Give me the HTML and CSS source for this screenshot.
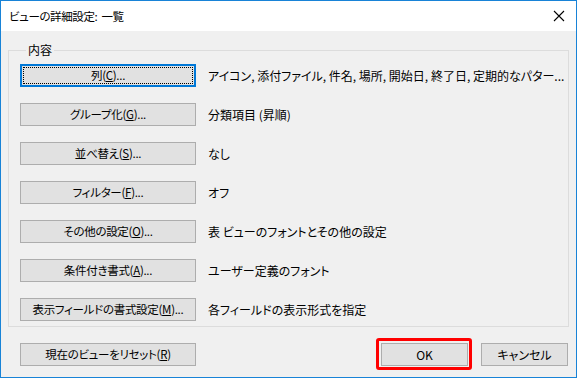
FILE: index.html
```html
<!DOCTYPE html>
<html lang="ja">
<head>
<meta charset="utf-8">
<link rel="stylesheet" href="styles.css">
</head>
<body>
<div class="window">
  <div class="titlebar">
    <span class="title">ビューの詳細設定: 一覧</span>
    <svg class="close" width="12" height="12" viewBox="0 0 12 12"><path d="M1 1L11 11M11 1L1 11" stroke="#000" stroke-width="1.1" fill="none"/></svg>
  </div>
  <div class="content">
    <fieldset class="group">
      <legend class="legend">内容</legend>
      <div class="rows">
        <div class="row"><button class="btn focused"><span class="focusring">列(<u>C</u>)...</span></button><span class="desc">アイコン, 添付ファイル, 件名, 場所, 開始日, 終了日, 定期的なパター...</span></div>
        <div class="row"><button class="btn">グループ化(<u>G</u>)...</button><span class="desc">分類項目 (昇順)</span></div>
        <div class="row"><button class="btn">並べ替え(<u>S</u>)...</button><span class="desc">なし</span></div>
        <div class="row"><button class="btn">フィルター(<u>F</u>)...</button><span class="desc">オフ</span></div>
        <div class="row"><button class="btn">その他の設定(<u>O</u>)...</button><span class="desc">表 ビューのフォントとその他の設定</span></div>
        <div class="row"><button class="btn">条件付き書式(<u>A</u>)...</button><span class="desc">ユーザー定義のフォント</span></div>
        <div class="row"><button class="btn">表示フィールドの書式設定(<u>M</u>)...</button><span class="desc">各フィールドの表示形式を指定</span></div>
      </div>
    </fieldset>
    <div class="footer">
      <button class="btn">現在のビューをリセット(<u>R</u>)</button>
      <div class="footer-right">
        <div class="ok-wrap"><button class="btn small">OK</button><span class="highlight"></span></div>
        <button class="btn small">キャンセル</button>
      </div>
    </div>
  </div>
</div>
</body>
</html>
```

FILE: styles.css
```css
html, body {
  margin: 0;
  padding: 0;
  background: #f0f0f0;
}
body {
  font-family: "Noto Sans CJK JP", "Noto Sans", sans-serif;
  font-size: 12px;
  color: #000;
  font-feature-settings: "palt";
}
.window {
  width: 577px;
  height: 378px;
  box-sizing: border-box;
  border: 1px solid #1883d7;
  background: #f0f0f0;
  display: flex;
  flex-direction: column;
}
.titlebar {
  height: 30px;
  background: #fff;
  display: flex;
  align-items: center;
  justify-content: space-between;
  padding: 0 10px 0 8px;
  flex-shrink: 0;
}
.title {
  font-size: 11.5px;
  letter-spacing: -0.4px;
  word-spacing: 2px;
  line-height: 16px;
}
.close {
  display: block;
  margin-right: 1px;
}
.content {
  padding: 11px 7px 0 7px;
  display: flex;
  flex-direction: column;
}
.group {
  margin: 0;
  padding: 6px 10px 5px 11px;
  border: 1px solid #dcdcdc;
  min-width: 0;
}
.legend {
  padding: 0 2px;
  margin-left: 6px;
  line-height: 16px;
  font-size: 12px;
}
.rows {
  display: flex;
  flex-direction: column;
  gap: 16px;
}
.row {
  display: flex;
  align-items: center;
  gap: 12px;
  height: 23px;
}
.btn {
  font-family: inherit;
  font-size: 11.5px;
  letter-spacing: -0.3px;
  font-feature-settings: "palt";
  color: #000;
  width: 176px;
  height: 23px;
  box-sizing: border-box;
  background: #e1e1e1;
  border: 1px solid #adadad;
  border-radius: 0;
  padding: 0;
  margin: 0;
  line-height: 15px;
  display: flex;
  align-items: center;
  justify-content: center;
  flex-shrink: 0;
}
.btn u {
  text-underline-offset: 1px;
}
.btn.focused {
  border: 1px solid #0078d7;
  box-shadow: inset 0 0 0 1px #0078d7;
  padding: 2px;
}
.focusring {
  flex: 1;
  align-self: stretch;
  display: flex;
  align-items: center;
  justify-content: center;
  outline: 1px dotted #000;
  outline-offset: -1px;
}
.desc {
  white-space: nowrap;
  line-height: 16px;
}
.footer {
  display: flex;
  justify-content: space-between;
  align-items: center;
  margin-top: 16px;
  padding-left: 12px;
  padding-right: 1px;
}
.footer-right {
  display: flex;
  gap: 13px;
}
.btn.small {
  width: 87px;
  font-size: 12px;
  letter-spacing: 0;
}
.ok-wrap {
  position: relative;
}
.highlight {
  position: absolute;
  left: -5px;
  top: -5px;
  right: -4px;
  bottom: -4px;
  border: 3px solid #ff0000;
  border-radius: 3px;
}
```
